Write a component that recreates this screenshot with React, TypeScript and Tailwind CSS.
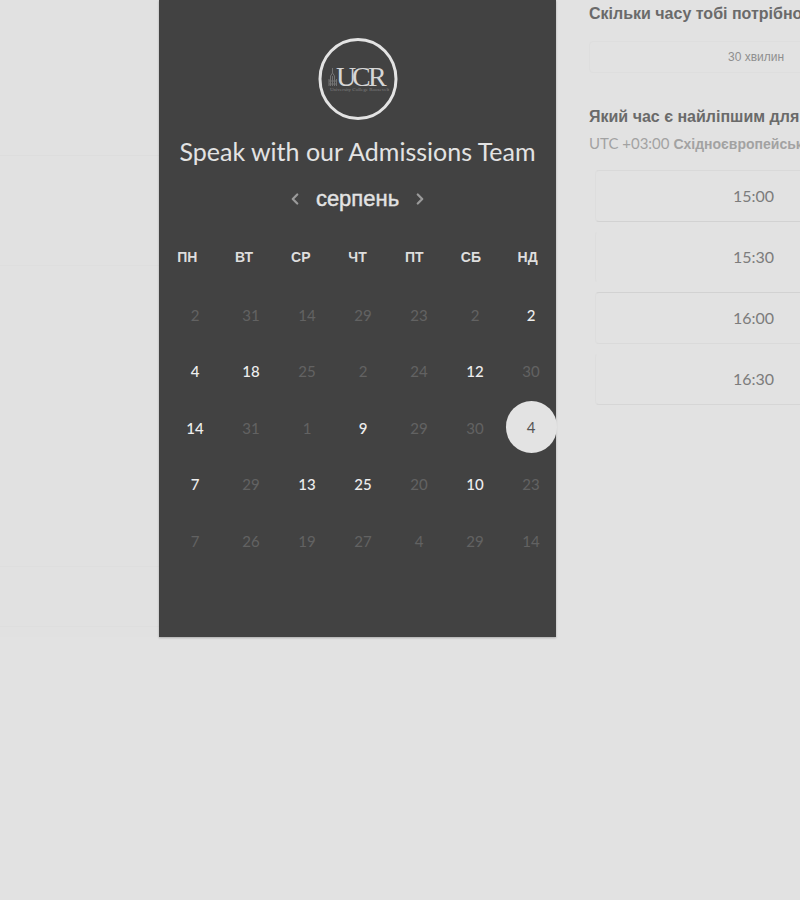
import { ChevronLeft, ChevronRight } from "lucide-react";

type Day = { n: number; state?: "open" | "selected" };

const weekdays = ["ПН", "ВТ", "СР", "ЧТ", "ПТ", "СБ", "НД"];

const off = (n: number): Day => ({ n });
const open = (n: number): Day => ({ n, state: "open" });

const days: Day[] = [
  off(2), off(31), off(14), off(29), off(23), off(2), open(2),
  open(4), open(18), off(25), off(2), off(24), open(12), off(30),
  open(14), off(31), off(1), open(9), off(29), off(30), { n: 4, state: "selected" },
  open(7), off(29), open(13), open(25), off(20), open(10), off(23),
  off(7), off(26), off(19), off(27), off(4), off(29), off(14),
];

const slots = [
  { time: "15:00", box: "border-t-[#d9d9d9] border-b-[#d2d2d2]" },
  { time: "15:30", box: "border-t-transparent border-b-transparent" },
  { time: "16:00", box: "border-t-[#d2d2d2] border-b-[#dadada]" },
  { time: "16:30", box: "border-t-transparent border-b-[#d6d6d6]" },
];

function Logo() {
  return (
    <svg width="80" height="82" viewBox="0 0 80 82" role="img" aria-label="UCR">
      <ellipse cx="40" cy="41" rx="38" ry="39.5" fill="none" stroke="#e3e3e3" strokeWidth="3" />
      <path
        d="M14.5 30v5M12.5 48V38l2-3 2 3v10M11 48v-7M18.5 48v-7M11 43h8M11 46h8M14.5 38v10"
        stroke="#727272"
        strokeWidth="1"
        fill="none"
      />
      <text y="48" fontSize="28" fill="#d6d6d6" className="font-['Liberation_Serif',serif]">
        <tspan x="18">U</tspan>
        <tspan x="34">C</tspan>
        <tspan x="50">R</tspan>
      </text>
      <text x="12" y="53" fontSize="5" fill="#808080" className="font-['Liberation_Serif',serif]">
        University College Roosevelt
      </text>
    </svg>
  );
}

function DayButton({ day }: { day: Day }) {
  if (day.state === "selected") {
    return (
      <button aria-pressed="true" className="-mt-0.5 h-[52px] w-[51px] shrink-0 rounded-full bg-[#e3e3e3] text-[#555555]">
        {day.n}
      </button>
    );
  }
  if (day.state === "open") {
    return <button className="size-10 font-medium text-[#eeeeee]">{day.n}</button>;
  }
  return (
    <button disabled className="size-10 text-[#626262]">
      {day.n}
    </button>
  );
}

function Calendar() {
  return (
    <section className="flex w-[397px] shrink-0 flex-col items-center bg-[#424242] pt-[38px] pb-[68px] shadow-[0_1px_2px_rgba(0,0,0,0.25)]">
      <Logo />
      <h1 className="mt-[15px] text-[25px] leading-8 whitespace-nowrap text-[#e3e3e3]">Speak with our Admissions Team</h1>
      <div className="mt-4 flex h-8 items-center gap-3">
        <button aria-label="Попередній місяць" className="text-[#9a9a9a]">
          <ChevronLeft size={18} strokeWidth={3} />
        </button>
        <h2 className="font-['Liberation_Sans',sans-serif] text-[22px] leading-8 text-[#e3e3e3] [-webkit-text-stroke:0.4px_#e3e3e3]">серпень</h2>
        <button aria-label="Наступний місяць" className="text-[#9a9a9a]">
          <ChevronRight size={18} strokeWidth={3} />
        </button>
      </div>
      <div className="mt-[30px] grid w-full grid-cols-7 text-center font-['Liberation_Sans',sans-serif] text-[14px] leading-6 font-bold text-[#dedede]">
        {weekdays.map((d) => (
          <span key={d}>{d}</span>
        ))}
      </div>
      <div className="mt-[18px] h-[282px] self-stretch pl-2">
        <div className="-mr-[3px] grid h-full grid-cols-7 grid-rows-5 text-[15px]">
          {days.map((day, i) => (
            <div key={i} className="flex items-center justify-center">
              <DayButton day={day} />
            </div>
          ))}
        </div>
      </div>
    </section>
  );
}

function Times() {
  return (
    <section className="min-w-0 flex-1 overflow-hidden pl-[33px]">
      <div className="w-[334px] font-['Liberation_Sans',sans-serif]">
        <h2 className="pt-0.5 text-base leading-6 font-bold whitespace-nowrap text-[#6a6a6a]">Скільки часу тобі потрібно</h2>
        <button className="mt-[15px] block h-8 w-full rounded-sm border border-[#dedede] text-[12px] text-[#8f8f8f]">30 хвилин</button>
        <h2 className="mt-8 text-base leading-6 font-bold whitespace-nowrap text-[#6a6a6a]">Який час є найліпшим для</h2>
        <p className="text-[14px] leading-7 font-bold whitespace-nowrap text-[#a2a2a2]">
          <span className="font-['Lato',sans-serif] text-[15px] font-normal">UTC +03:00</span> Східноєвропейськ
        </p>
        <div className="mt-3 flex flex-col gap-[9px] pl-1.5">
          {slots.map((s) => (
            <button
              key={s.time}
              className={`h-[52px] w-[317px] rounded-sm border border-x-[#dddddd] font-['Lato',sans-serif] text-base text-[#7c7c7c] ${s.box}`}
            >
              {s.time}
            </button>
          ))}
        </div>
      </div>
    </section>
  );
}

export default function App() {
  return (
    <main className="min-h-screen bg-[#e2e2e2] font-['Lato',sans-serif]">
      <div className="flex">
        <div className="flex w-[159px] shrink-0 flex-col bg-[#e1e1e1]">
          <div className="h-[156px] border-b border-[#dddddd]" />
          <div className="h-[110px] border-b border-[#dedede]" />
          <div className="h-[301px] border-b border-[#dedede]" />
          <div className="h-[60px] border-b border-[#dedede]" />
        </div>
        <Calendar />
        <Times />
      </div>
    </main>
  );
}
